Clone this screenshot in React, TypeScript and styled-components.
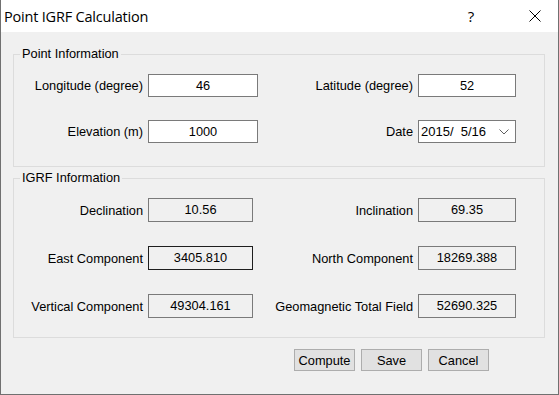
import styled, { createGlobalStyle } from "styled-components";

const GlobalStyle = createGlobalStyle`
  html, body {
    margin: 0;
    padding: 0;
    overflow: hidden;
  }
  * {
    box-sizing: border-box;
  }
`;

type Field = { label: string; value: string; focused?: boolean };

const igrfLeft: Field[] = [
  { label: "Declination", value: "10.56" },
  { label: "East Component", value: "3405.810", focused: true },
  { label: "Vertical Component", value: "49304.161" },
];

const igrfRight: Field[] = [
  { label: "Inclination", value: "69.35" },
  { label: "North Component", value: "18269.388" },
  { label: "Geomagnetic Total Field", value: "52690.325" },
];

function CloseIcon() {
  return (
    <svg width="12" height="12" viewBox="0 0 12 12">
      <path d="M0.5 0.5 L11.5 11.5 M11.5 0.5 L0.5 11.5" stroke="#000" strokeWidth="1" fill="none" />
    </svg>
  );
}

function Chevron() {
  return (
    <svg width="10" height="6" viewBox="0 0 10 6">
      <path d="M0.5 0.5 L5 5 L9.5 0.5" stroke="#606060" strokeWidth="1" fill="none" />
    </svg>
  );
}

export default function App() {
  return (
    <>
      <GlobalStyle />
      <Window>
        <TitleBar>
          <Title>Point IGRF Calculation</Title>
          <TitleButtons>
            <HelpButton>?</HelpButton>
            <CloseButton>
              <CloseIcon />
            </CloseButton>
          </TitleButtons>
        </TitleBar>
        <Body>
          <Group $top={15} $bottom={23}>
            <Legend>Point Information</Legend>
            <Grid $cols="129px 110px 150px 98px" $rowH={23} $gap={23}>
              <Label>Longitude (degree)</Label>
              <TextInput>46</TextInput>
              <Label>Latitude (degree)</Label>
              <TextInput>52</TextInput>
              <Label>Elevation (m)</Label>
              <TextInput>1000</TextInput>
              <Label>Date</Label>
              <DateInput>
                <span>2015/&nbsp; 5/16</span>
                <Chevron />
              </DateInput>
            </Grid>
          </Group>
          <Group $top={4} $bottom={19}>
            <Legend>IGRF Information</Legend>
            <Grid $cols="129px 105px 155px 98px" $rowH={24} $gap={24}>
              {igrfLeft.map((f, i) => (
                <Row key={f.label}>
                  <Label>{f.label}</Label>
                  <ReadOnly $focused={f.focused}>{f.value}</ReadOnly>
                  <Label>{igrfRight[i].label}</Label>
                  <ReadOnly>{igrfRight[i].value}</ReadOnly>
                </Row>
              ))}
            </Grid>
          </Group>
          <Buttons>
            <Button $w={61}>Compute</Button>
            <Button $w={61}>Save</Button>
            <Button $w={61}>Cancel</Button>
          </Buttons>
        </Body>
      </Window>
    </>
  );
}

const Window = styled.div`
  width: 559px;
  height: 395px;
  display: flex;
  flex-direction: column;
  border: 1px solid #707070;
  border-top: none;
  background: #f0f0f0;
  font-family: "Liberation Sans", Arial, sans-serif;
  font-size: 12.8px;
  color: #000;
`;

const TitleBar = styled.div`
  height: 32px;
  background: #fff;
  display: flex;
  align-items: center;
  justify-content: space-between;
  padding-left: 3px;
`;

const Title = styled.div`
  font-family: "Open Sans", "Noto Sans", sans-serif;
  font-size: 14.5px;
  letter-spacing: -0.2px;
  color: #000;
`;

const TitleButtons = styled.div`
  display: flex;
  align-items: center;
  height: 100%;
`;

const HelpButton = styled.div`
  width: 46px;
  height: 100%;
  display: flex;
  align-items: center;
  justify-content: center;
  font-family: "Open Sans", "Noto Sans", sans-serif;
  font-size: 15px;
`;

const CloseButton = styled.div`
  width: 46px;
  height: 100%;
  display: flex;
  align-items: center;
  justify-content: center;
  margin-left: 18px;
`;

const Body = styled.div`
  flex: 1;
  display: flex;
  flex-direction: column;
  padding: 0 13px 0 12px;
`;

const Group = styled.fieldset<{ $top: number; $bottom: number }>`
  margin: ${(p) => p.$top}px 0 0 0;
  padding: 13px 0 ${(p) => p.$bottom}px 0;
  border: 1px solid #dcdcdc;
  min-width: 0;
`;

const Legend = styled.legend`
  margin-left: 6px;
  padding: 0 2px;
  line-height: 14px;
`;

const Grid = styled.div<{ $cols: string; $rowH: number; $gap: number }>`
  display: grid;
  grid-template-columns: ${(p) => p.$cols};
  grid-auto-rows: ${(p) => p.$rowH}px;
  column-gap: 5px;
  row-gap: ${(p) => p.$gap}px;
`;

const Row = styled.div`
  display: contents;
`;

const Label = styled.div`
  display: flex;
  align-items: center;
  justify-content: flex-end;
  white-space: nowrap;
`;

const TextInput = styled.div`
  display: flex;
  align-items: center;
  justify-content: center;
  background: #fff;
  border: 1px solid #7a7a7a;
`;

const DateInput = styled.div`
  display: flex;
  align-items: center;
  justify-content: space-between;
  background: #fff;
  border: 1px solid #7a7a7a;
  padding: 0 6px 0 2px;
  font-size: 13px;
`;

const ReadOnly = styled.div<{ $focused?: boolean }>`
  display: flex;
  align-items: center;
  justify-content: center;
  background: #f0f0f0;
  border: 1px solid ${(p) => (p.$focused ? "#1e1e1e" : "#7a7a7a")};
  padding-bottom: 2px;
`;

const Buttons = styled.div`
  display: flex;
  justify-content: flex-end;
  gap: 6px;
  margin-top: 11px;
  padding-right: 56px;
`;

const Button = styled.div<{ $w: number }>`
  width: ${(p) => p.$w}px;
  height: 22px;
  display: flex;
  align-items: center;
  justify-content: center;
  background: #e1e1e1;
  border: 1px solid #adadad;
`;
